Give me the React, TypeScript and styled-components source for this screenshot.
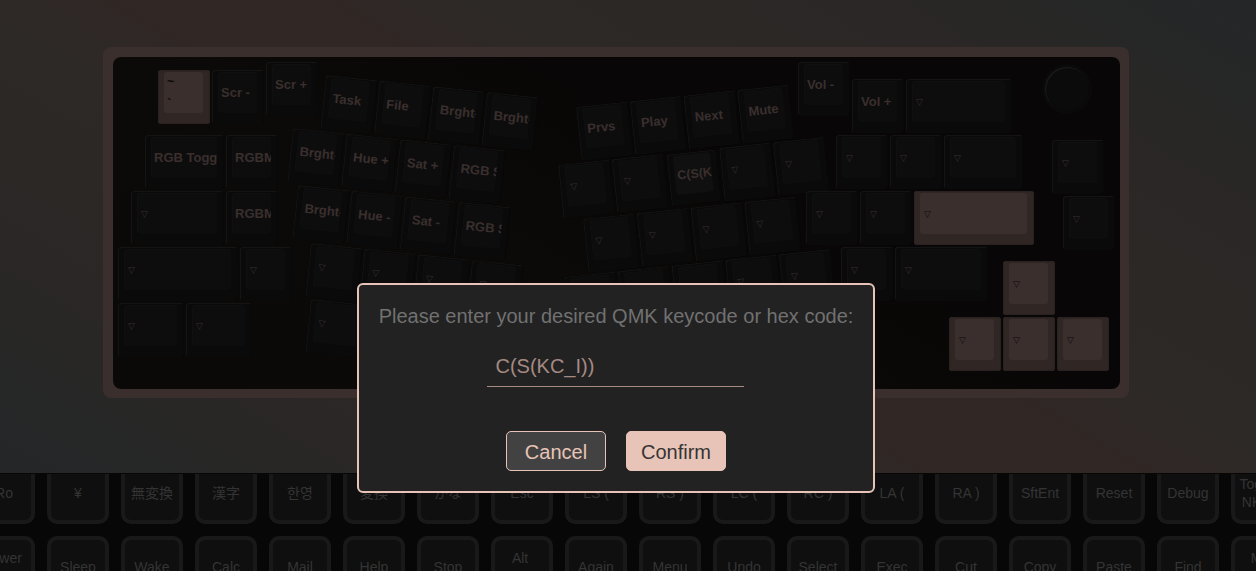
import React from "react";
import styled, { createGlobalStyle } from "styled-components";

const GlobalStyle = createGlobalStyle`
  * { box-sizing: border-box; }
  html, body { margin: 0; height: 100%; background: #070707; overflow: hidden; }
  #root { height: 100%; }
  body, button, input {
    font-family: "Liberation Sans", "Noto Sans CJK JP", "Noto Sans CJK KR", "DejaVu Sans", sans-serif;
  }
`;

const Page = styled.div`
  position: relative;
  display: flex;
  flex-direction: column;
  height: 100vh;
  overflow: hidden;
`;

const Stage = styled.main`
  flex: 1;
  min-height: 0;
  display: flex;
  justify-content: center;
  align-items: flex-start;
  padding: 47px 24px 0 0;
  background: linear-gradient(
    30deg,
    #252628 0%,
    #262726 10%,
    #2b2726 20%,
    #2d2926 38%,
    #312725 46%,
    #312725 54%,
    #2d2926 62%,
    #2b2726 80%,
    #262726 90%,
    #242628 100%
  );
`;

const Case = styled.section`
  flex: none;
  padding: 10px 9px 9px 10px;
  border-radius: 8px;
  background: #3a2f2d;
`;

/* Free canvas on which rows of keys sit at any place and angle. */
const Plate = styled.div`
  position: relative;
  width: 1007px;
  height: 332px;
  border-radius: 8px;
  background: linear-gradient(30deg, #0a0908 0%, #0c0a08 40%, #080606 65%, #080606 100%);
`;

const KeyRow = styled.div<{ $x: number; $y: number; $angle: number }>`
  position: absolute;
  left: ${(p) => p.$x}px;
  top: ${(p) => p.$y}px;
  display: flex;
  gap: 2px;
  transform: rotate(${(p) => p.$angle}deg);
  transform-origin: 0 0;
`;

const Key = styled.button<{ $w: number; $accent?: boolean; $picked?: boolean }>`
  flex: none;
  display: block;
  width: ${(p) => p.$w}px;
  height: 54px;
  padding: 2px 7px 11px 6px;
  border: 0;
  border-radius: 3px;
  background: ${(p) => (p.$accent ? "#302725" : "#0a0a0a")};
  box-shadow: ${(p) =>
    p.$accent
      ? "inset 0 0 1px 1px #2b2322"
      : "inset 1px 1px 0 #141414, inset -1px 0 0 #080808"};
  transform: ${(p) => (p.$picked ? "scale(0.96)" : "none")};
  color: ${(p) => (p.$accent ? "#0c0a0a" : "#3a2f2d")};
  text-align: left;
`;

const Cap = styled.span<{ $accent?: boolean; $picked?: boolean }>`
  display: flex;
  flex-direction: column;
  justify-content: center;
  height: 41px;
  padding-left: 3px;
  overflow: hidden;
  border-radius: 3px;
  background: ${(p) => (p.$accent ? "#3a2f2d" : p.$picked ? "#101010" : "#0d0d0d")};
  box-shadow: ${(p) => (p.$accent ? "none" : "inset 1px 1px 0 #101010")};
  font-size: 13px;
  font-weight: 700;
  line-height: 22px;
  white-space: nowrap;
`;

const Through = styled.span`
  margin-left: 1px;
  font-family: "DejaVu Sans", sans-serif;
  font-size: 9px;
  font-weight: 700;
`;

const Knob = styled.button`
  position: absolute;
  left: 932px;
  top: 10px;
  width: 44px;
  height: 44px;
  padding: 0;
  border: 0;
  border-radius: 50%;
  background: #0b0b0b;
  box-shadow: inset 1px 1px 1px #1c1c1c, 0 0 0 3px #0b0a0a;
`;

const Palette = styled.section`
  flex: none;
  height: 98px;
  overflow: hidden;
  border-top: 1px solid #070707;
  background: #070707;
`;

const PaletteRow = styled.div`
  display: flex;
  gap: 12px;
  margin: 0 0 12px -27px;
  &:first-child { margin-top: -12px; }
`;

const Keycode = styled.button`
  flex: none;
  width: 62px;
  height: 62px;
  padding: 0 4px;
  border: 4px solid #191919;
  border-radius: 10px;
  background: #0f0f0f;
  color: #343434;
  font-size: 14px;
  line-height: 18px;
  white-space: break-spaces;
`;

const Overlay = styled.div`
  position: absolute;
  inset: 0;
  display: flex;
  justify-content: center;
  align-items: flex-start;
  padding: 283px 24px 0 0;
`;

const Dialog = styled.form`
  display: flex;
  flex-direction: column;
  align-items: center;
  padding: 20px;
  border: 2px solid #e8c4b8;
  border-radius: 6px;
  background: #222;
`;

const Prompt = styled.label`
  color: #717171;
  font-size: 20px;
  line-height: 22px;
`;

const CodeInput = styled.input`
  width: 257px;
  height: 40px;
  margin: 20px 0 44px;
  padding: 0 8px;
  border: 0;
  border-bottom: 1px solid #a68a82;
  outline: 0;
  background: transparent;
  color: #a68a82;
  font-size: 20px;
`;

const Actions = styled.div`
  display: flex;
  gap: 20px;
`;

const Action = styled.button<{ $primary?: boolean }>`
  width: 100px;
  height: 40px;
  padding: 2px 0 0;
  border: 1px solid #e8c4b8;
  border-radius: 5px;
  background: ${(p) => (p.$primary ? "#e8c4b8" : "#424242")};
  color: ${(p) => (p.$primary ? "#363434" : "#e8c4b8")};
  font-size: 20px;
`;

type KeyDef = { label?: string[]; w?: number; accent?: boolean; picked?: boolean };
type RowDef = { x: number; y: number; angle?: number; keys: KeyDef[] };

const k = (...label: string[]): KeyDef => ({ label });
const blank = (w = 52, accent = false): KeyDef => ({ w, accent });

const rows: RowDef[] = [
  { x: 45, y: 13, keys: [{ label: ["~", "`"], accent: true }, k("Scr -")] },
  { x: 153, y: 5, keys: [k("Scr +")] },
  { x: 32, y: 78, keys: [{ label: ["RGB Toggle"], w: 79 }, k("RGBMD +")] },
  { x: 18, y: 134, keys: [blank(93), k("RGBMD -")] },
  { x: 5, y: 190, keys: [blank(120), blank()] },
  { x: 5, y: 246, keys: [blank(66), blank(66)] },

  { x: 213, y: 18, angle: 6, keys: [k("Task"), k("File"), k("Brght-"), k("Brght-")] },
  { x: 180, y: 71, angle: 6, keys: [k("Brght-"), k("Hue +"), k("Sat +"), k("RGB SPI")] },
  { x: 185, y: 128, angle: 6, keys: [k("Brght-"), k("Hue -"), k("Sat -"), k("RGB SPD")] },
  { x: 198, y: 186, angle: 6, keys: [blank(), blank(), blank(), blank()] },
  { x: 198, y: 242, angle: 6, keys: [blank(106)] },

  { x: 463, y: 50, angle: -6, keys: [k("Prvs"), k("Play"), k("Next"), k("Mute")] },
  {
    x: 445,
    y: 108,
    angle: -6,
    keys: [blank(), blank(), { label: ["C(S(KC_I))"], picked: true }, blank(), blank()],
  },
  { x: 470, y: 162, angle: -6, keys: [blank(), blank(), blank(), blank()] },
  { x: 451, y: 220, angle: -6, keys: [blank(), blank(), blank(), blank(), blank()] },

  { x: 685, y: 5, keys: [k("Vol -")] },
  { x: 739, y: 22, keys: [k("Vol +"), blank(106)] },
  { x: 723, y: 78, keys: [blank(), blank(), blank(79)] },
  { x: 693, y: 134, keys: [blank(), blank(), blank(120, true)] },
  { x: 728, y: 190, keys: [blank(), blank(93)] },
  { x: 939, y: 83, keys: [blank()] },
  { x: 950, y: 139, keys: [blank()] },
  { x: 890, y: 204, keys: [blank(52, true)] },
  { x: 836, y: 260, keys: [blank(52, true), blank(52, true), blank(52, true)] },
];

const palette: string[][] = [
  ["Ro", "¥", "無変換", "漢字", "한영", "変換", "かな", "Esc", "LS (", "RS )", "LC (", "RC )",
    "LA (", "RA )", "SftEnt", "Reset", "Debug", "Toggle NKRO"],
  ["Power OSX", "Sleep", "Wake", "Calc", "Mail", "Help", "Stop", "Alt Erase", "Again", "Menu",
    "Undo", "Select", "Exec", "Cut", "Copy", "Paste", "Find", "My Comp"],
];

export default function App() {
  return (
    <>
      <GlobalStyle />
      <Page>
        <Stage>
          <Case>
            <Plate>
              {rows.map((row, r) => (
                <KeyRow key={r} $x={row.x} $y={row.y} $angle={row.angle ?? 0}>
                  {row.keys.map((key, i) => (
                    <Key key={i} type="button" $w={key.w ?? 52} $accent={key.accent} $picked={key.picked}>
                      <Cap $accent={key.accent} $picked={key.picked}>
                        {key.label ? (
                          key.label.map((line) => <span key={line}>{line}</span>)
                        ) : (
                          <Through>▽</Through>
                        )}
                      </Cap>
                    </Key>
                  ))}
                </KeyRow>
              ))}
              <Knob type="button" aria-label="Encoder" />
            </Plate>
          </Case>
        </Stage>
        <Palette>
          {palette.map((codes, r) => (
            <PaletteRow key={r}>
              {codes.map((code) => (
                <Keycode key={code} type="button">{code}</Keycode>
              ))}
            </PaletteRow>
          ))}
        </Palette>
        <Overlay>
          <Dialog onSubmit={(e) => e.preventDefault()}>
            <Prompt htmlFor="keycode">Please enter your desired QMK keycode or hex code:</Prompt>
            <CodeInput id="keycode" type="text" defaultValue="C(S(KC_I))" />
            <Actions>
              <Action type="button">Cancel</Action>
              <Action type="submit" $primary>Confirm</Action>
            </Actions>
          </Dialog>
        </Overlay>
      </Page>
    </>
  );
}
